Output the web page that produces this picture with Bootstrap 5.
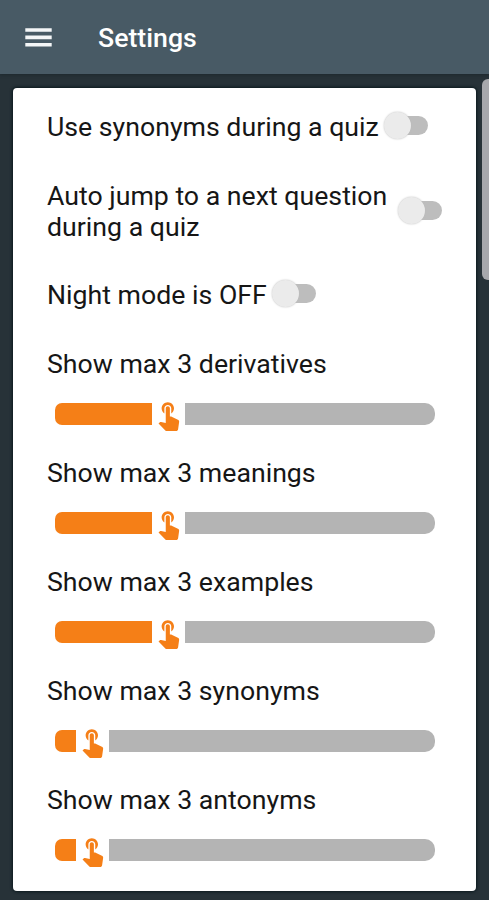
<!DOCTYPE html>
<html lang="en">
<head>
<meta charset="utf-8">
<meta name="viewport" content="width=device-width, initial-scale=1">
<title>Settings</title>
<link href="https://cdn.jsdelivr.net/npm/bootstrap@5.3.0/dist/css/bootstrap.min.css" rel="stylesheet">
<style>
body{background:#273238;font-family:Roboto,"Liberation Sans",sans-serif;color:#161616;height:900px;overflow:hidden}
.topbar{height:74px;background:#485a65;box-shadow:0 1px 3px #1d282e;padding:2px 25px 0}
.topbar h1{font-size:26.7px;font-weight:500;line-height:31px;margin-left:46px}
.panel{width:463px;height:803px;margin:14px 0 0 13px;border-radius:4px;padding:24px 34px 0;box-shadow:0 0 3px 1px #0b191e;font-size:26.7px;line-height:31px}
.option{margin-bottom:38px}
.option-tall{margin-bottom:37px}
.toggle{width:44px;height:27px}
.toggle .rail{width:30px;height:19px;background:#bdbdbd}
.toggle .knob{width:27px;height:27px;background:#ebebeb;box-shadow:0 0 2px #bbb;left:0;top:0}
.up{margin-top:-4px}
.slider{height:22px;margin:23px 0 33px;padding:0 7px 0 8px}
.fill{background:#f57f17;border-radius:7px 0 0 7px}
.rest{background:#b4b4b4;border-radius:0 10px 10px 0}
.handle{width:33px;height:33px;fill:#f57f17}
.thumbbar{right:-8px;top:79px;width:15px;height:201px;border-radius:6px;background:#a7a8ac}
</style>
<script src="https://cdn.jsdelivr.net/npm/bootstrap@5.3.0/dist/js/bootstrap.bundle.min.js"></script>
</head>
<body class="position-relative">
<svg class="d-none"><symbol id="touch" viewBox="0 0 24 24"><path d="M9 11.24V7.5C9 6.12 10.12 5 11.5 5S14 6.12 14 7.5v3.74c1.21-.81 2-2.18 2-3.74C16 5.01 13.99 3 11.5 3S7 5.01 7 7.5c0 1.56.79 2.93 2 3.74zm9.84 4.63l-4.54-2.26c-.17-.07-.35-.11-.54-.11H13v-6c0-.83-.67-1.5-1.5-1.5S10 6.67 10 7.5v10.74l-3.43-.72c-.08-.01-.15-.03-.24-.03-.31 0-.59.13-.79.33l-.79.8 4.94 4.94c.27.27.65.44 1.06.44h6.79c.75 0 1.33-.55 1.44-1.28l.75-5.27c.01-.07.02-.14.02-.2 0-.62-.38-1.16-.91-1.38z"/></symbol></svg>
<header class="topbar d-flex align-items-center text-white">
  <svg width="27" height="20" fill="#f4f6f7"><path d="M.3.2h26.4v3.6H.3zM.3 7.6h26.4v3.6H.3zM.3 15h26.4v3.6H.3z"/></svg>
  <h1 class="mb-0">Settings</h1>
</header>
<main class="panel bg-white">
  <div class="option d-flex align-items-center">
    <span class="text-nowrap" style="width:337px">Use synonyms during a quiz</span>
    <span class="toggle up position-relative d-flex align-items-center justify-content-end flex-shrink-0"><span class="rail rounded-pill"></span><span class="knob rounded-circle position-absolute"></span></span>
  </div>
  <div class="option option-tall d-flex align-items-center">
    <span class="text-nowrap" style="width:351px">Auto jump to a next question<br>during a quiz</span>
    <span class="toggle up position-relative d-flex align-items-center justify-content-end flex-shrink-0"><span class="rail rounded-pill"></span><span class="knob rounded-circle position-absolute"></span></span>
  </div>
  <div class="option d-flex align-items-center">
    <span class="text-nowrap" style="width:225px">Night mode is OFF</span>
    <span class="toggle up position-relative d-flex align-items-center justify-content-end flex-shrink-0"><span class="rail rounded-pill"></span><span class="knob rounded-circle position-absolute"></span></span>
  </div>
  <div>Show max 3 derivatives</div>
  <div class="slider d-flex align-items-center"><span class="fill h-100" style="width:97px"></span><svg class="handle flex-shrink-0"><use href="#touch"/></svg><span class="rest h-100 flex-grow-1"></span></div>
  <div>Show max 3 meanings</div>
  <div class="slider d-flex align-items-center"><span class="fill h-100" style="width:97px"></span><svg class="handle flex-shrink-0"><use href="#touch"/></svg><span class="rest h-100 flex-grow-1"></span></div>
  <div>Show max 3 examples</div>
  <div class="slider d-flex align-items-center"><span class="fill h-100" style="width:97px"></span><svg class="handle flex-shrink-0"><use href="#touch"/></svg><span class="rest h-100 flex-grow-1"></span></div>
  <div>Show max 3 synonyms</div>
  <div class="slider d-flex align-items-center"><span class="fill h-100" style="width:21px"></span><svg class="handle flex-shrink-0"><use href="#touch"/></svg><span class="rest h-100 flex-grow-1"></span></div>
  <div>Show max 3 antonyms</div>
  <div class="slider d-flex align-items-center"><span class="fill h-100" style="width:21px"></span><svg class="handle flex-shrink-0"><use href="#touch"/></svg><span class="rest h-100 flex-grow-1"></span></div>
</main>
<div class="thumbbar position-absolute"></div>
</body>
</html>
